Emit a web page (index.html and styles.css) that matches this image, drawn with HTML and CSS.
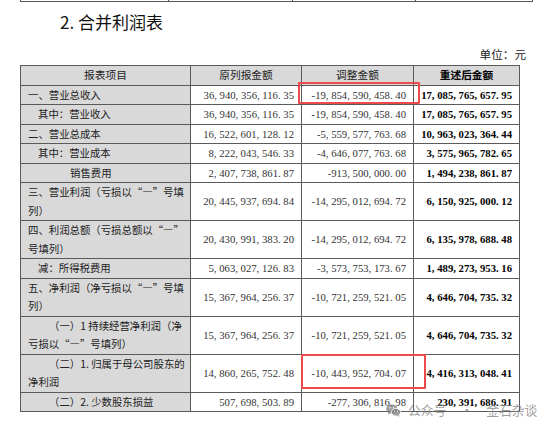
FILE: index.html
```html
<!DOCTYPE html>
<html lang="zh-CN">
<head>
<meta charset="utf-8">
<title>合并利润表</title>
<link rel="stylesheet" href="styles.css">
</head>
<body>
<div class="prev">
  <div class="pc c1"></div><div class="pc c2"></div><div class="pc c3"></div><div class="pc c4"></div>
</div>
<h2 class="title">2. 合并利润表</h2>
<div class="unit">单位：元</div>
<table class="sheet">
  <colgroup><col class="w1"><col class="w2"><col class="w3"><col class="w4"></colgroup>
  <thead>
    <tr><th>报表项目</th><th>原列报金额</th><th>调整金额</th><th class="b">重述后金额</th></tr>
  </thead>
  <tbody>
    <tr><td class="item">一、营业总收入</td><td class="num">36, 940, 356, 116. 35</td><td class="num">-19, 854, 590, 458. 40</td><td class="num b">17, 085, 765, 657. 95</td></tr>
    <tr><td class="item i1">其中：营业收入</td><td class="num">36, 940, 356, 116. 35</td><td class="num">-19, 854, 590, 458. 40</td><td class="num b">17, 085, 765, 657. 95</td></tr>
    <tr><td class="item">二、营业总成本</td><td class="num">16, 522, 601, 128. 12</td><td class="num">-5, 559, 577, 763. 68</td><td class="num b">10, 963, 023, 364. 44</td></tr>
    <tr><td class="item i1">其中：营业成本</td><td class="num">8, 222, 043, 546. 33</td><td class="num">-4, 646, 077, 763. 68</td><td class="num b">3, 575, 965, 782. 65</td></tr>
    <tr><td class="item i4">销售费用</td><td class="num">2, 407, 738, 861. 87</td><td class="num">-913, 500, 000. 00</td><td class="num b">1, 494, 238, 861. 87</td></tr>
    <tr><td class="item">三、营业利润（亏损以“—”号填<br>列）</td><td class="num">20, 445, 937, 694. 84</td><td class="num">-14, 295, 012, 694. 72</td><td class="num b">6, 150, 925, 000. 12</td></tr>
    <tr><td class="item">四、利润总额（亏损总额以“—”<br>号填列）</td><td class="num">20, 430, 991, 383. 20</td><td class="num">-14, 295, 012, 694. 72</td><td class="num b">6, 135, 978, 688. 48</td></tr>
    <tr><td class="item i1">减：所得税费用</td><td class="num">5, 063, 027, 126. 83</td><td class="num">-3, 573, 753, 173. 67</td><td class="num b">1, 489, 273, 953. 16</td></tr>
    <tr><td class="item">五、净利润（净亏损以“—”号填<br>列）</td><td class="num">15, 367, 964, 256. 37</td><td class="num">-10, 721, 259, 521. 05</td><td class="num b">4, 646, 704, 735. 32</td></tr>
    <tr><td class="item"><span class="ind2">（一）1 持续经营净利润（净</span><br>亏损以“—”号填列）</td><td class="num">15, 367, 964, 256. 37</td><td class="num">-10, 721, 259, 521. 05</td><td class="num b">4, 646, 704, 735. 32</td></tr>
    <tr><td class="item"><span class="ind2">（二）1. 归属于母公司股东的</span><br>净利润</td><td class="num">14, 860, 265, 752. 48</td><td class="num">-10, 443, 952, 704. 07</td><td class="num b">4, 416, 313, 048. 41</td></tr>
    <tr><td class="item"><span class="ind2">（二）2. 少数股东损益</span></td><td class="num">507, 698, 503. 89</td><td class="num">-277, 306, 816. 98</td><td class="num b">230, 391, 686. 91</td></tr>
  </tbody>
</table>
<div class="mark mark1"></div>
<div class="mark mark2"></div>
<div class="watermark">
  <svg class="wx" width="15" height="13" viewBox="0 0 15 13">
    <ellipse cx="5.8" cy="5" rx="5.6" ry="4.6" fill="currentColor"/>
    <path d="M2.4 8.2 L1.8 10.6 L4.6 9.2 Z" fill="currentColor"/>
    <ellipse cx="10" cy="8.2" rx="4.6" ry="3.8" fill="currentColor" stroke="#fff" stroke-width="0.8"/>
    <path d="M12.6 10.8 L13.4 12.8 L11 11.6 Z" fill="currentColor"/>
    <circle cx="4" cy="3.8" r="0.7" fill="#fff"/>
    <circle cx="7.6" cy="3.8" r="0.7" fill="#fff"/>
    <circle cx="8.6" cy="7.4" r="0.55" fill="#fff"/>
    <circle cx="11.4" cy="7.4" r="0.55" fill="#fff"/>
  </svg>
  <span class="wm-a">公众号</span><span class="wm-dot">·</span><span class="wm-b">金石杂谈</span>
</div>
</body>
</html>
```

FILE: styles.css
```css
* { box-sizing: border-box; }
body {
  margin: 0;
  background: #fff;
  color: #222;
  font-family: "Noto Sans CJK SC", "Liberation Serif", sans-serif;
  width: 550px;
  height: 431px;
  overflow: hidden;
  position: relative;
}
.prev {
  display: flex;
  margin-left: 20px;
  width: 513px;
  height: 2px;
  border-bottom: 1px solid #555;
}
.pc { height: 2px; border-left: 1px solid #555; }
.pc.c4 { border-right: 1px solid #555; }
.c1 { width: 148px; }
.c2 { width: 124px; }
.c3 { width: 123px; }
.c4 { width: 118px; }
.title {
  margin: 8px 0 0 0;
  padding-left: 60px;
  font-size: 17px;
  line-height: 24px;
  font-weight: 400;
  color: #111;
}
.unit {
  margin-top: 12px;
  padding-right: 24px;
  text-align: right;
  font-size: 11.6px;
  line-height: 16px;
  color: #222;
}
.sheet {
  margin: 3px 0 0 20px;
  border-collapse: collapse;
  table-layout: fixed;
  width: 499px;
}
.w1 { width: 170px; }
.w2 { width: 111px; }
.w3 { width: 112px; }
.w4 { width: 106px; }
.sheet th, .sheet td {
  border: 1px solid #5a5a5a;
  line-height: 18.5px;
  padding: 0 7px;
  white-space: nowrap;
  vertical-align: middle;
}
.sheet th {
  background: #d9d9d9;
  font-size: 10.7px;
  font-weight: 400;
  text-align: center;
  color: #222;
}
.sheet th.b { font-weight: 700; color: #000; }
.item {
  background: #d9d9d9;
  font-size: 10.4px;
  text-align: left;
  padding-right: 2px !important;
}
.i1 { padding-left: 17px !important; }
.i4 { padding-left: 49px !important; }
.ind2 { padding-left: 21px; }
.num {
  font-family: "Liberation Serif", serif;
  font-size: 10.7px;
  text-align: right;
  color: #333;
}
.num.b { font-weight: 700; color: #000; }
.mark {
  position: absolute;
  border: 2px solid #ee4a4c;
  border-radius: 1px;
}
.mark1 { left: 298px; top: 82px; width: 122px; height: 22px; }
.mark2 { left: 301px; top: 354px; width: 125px; height: 35px; }
.watermark {
  position: absolute;
  left: 386px;
  top: 402px;
  display: flex;
  align-items: center;
  color: rgba(125, 125, 125, 0.75);
  font-size: 12.8px;
  line-height: 16px;
}
.wx { display: block; margin-right: 7px; }
.wm-dot { margin: 0 13px 0 14px; }
```
